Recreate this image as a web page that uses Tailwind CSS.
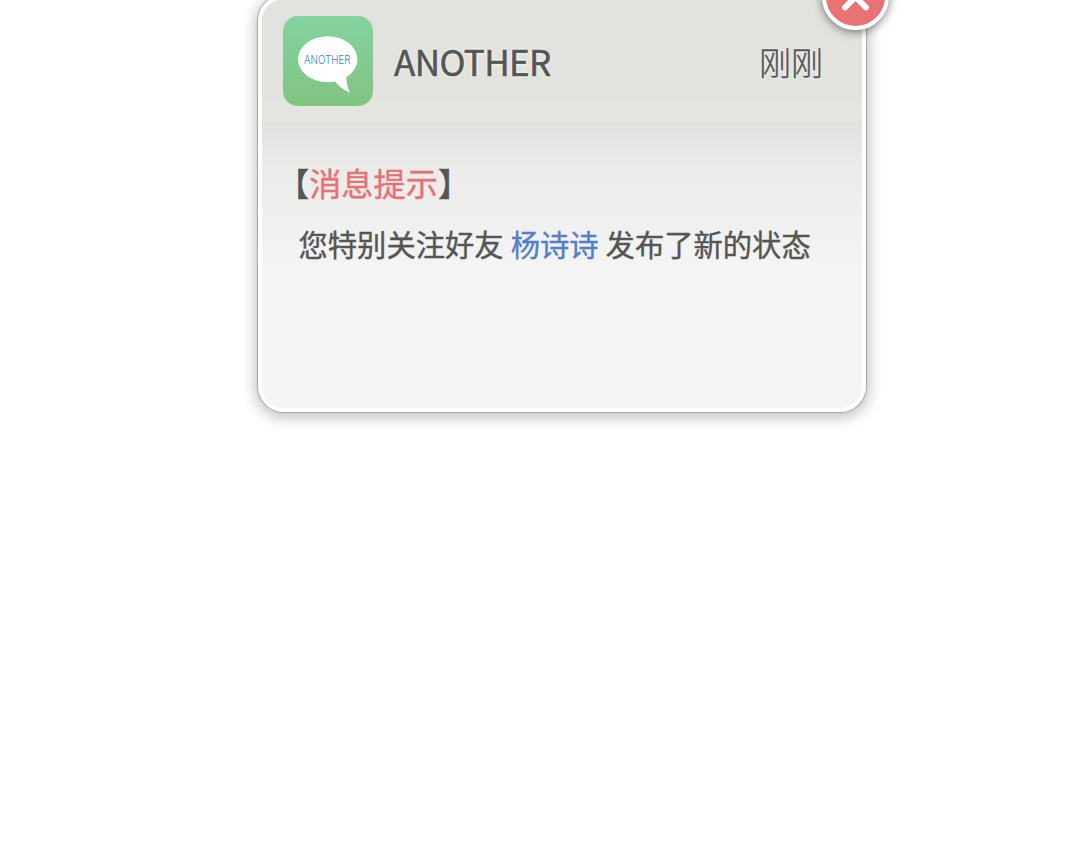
<!DOCTYPE html>
<html lang="zh-CN">
<head>
    <meta charset="UTF-8">
    <meta name="viewport" content="width=device-width, initial-scale=1.0">
    <title>ANOTHER</title>
    <script src="https://cdn.jsdelivr.net/npm/@tailwindcss/browser@4"></script>
</head>
<body class="h-screen overflow-hidden bg-white font-['Noto_Sans_CJK_SC',sans-serif] text-[#555654]">
    <!-- Notification card -->
    <main class="relative -mt-[5px] ml-[258px] h-[417px] w-[608px] rounded-[26px] border-4 border-white bg-[#f5f5f5] shadow-[0_0_1px_1px_#a8a8a8,0_3px_14px_3px_rgba(0,0,0,0.24)]">
        <!-- Header -->
        <header class="flex h-[122px] items-center rounded-t-[22px] bg-linear-to-b from-[#e2e3df] from-75% to-[#e6e7e2] pt-[2px] pr-[39px] pl-[21px]">
            <div class="h-[90px] w-[90px] overflow-hidden rounded-[15px] bg-linear-to-b from-[#84d3a0] to-[#81c480]">
                <svg class="h-full w-full" viewBox="0 0 90 90">
                    <ellipse cx="44.7" cy="43.3" rx="29.7" ry="23" fill="#fff"/>
                    <path d="M50 63 Q57 73 67 76.5 Q63 69 63 58 Z" fill="#fff"/>
                    <text x="21" y="48.2" textLength="46.5" lengthAdjust="spacingAndGlyphs" font-family="Inter, sans-serif" font-size="11.5" font-weight="300" fill="#3f7fd2">ANOTHER</text>
                </svg>
            </div>
            <h1 class="ml-[21px] text-[35px] leading-[50px] font-normal tracking-[-0.6px] [-webkit-text-stroke:0.6px_#555654] [text-shadow:0_0_2px_#fff,0_0_3px_#fff]">ANOTHER</h1>
            <time class="ml-auto text-[32px] leading-[50px] font-light [-webkit-text-stroke:0.5px_#555654] [text-shadow:0_0_2px_#fff,0_0_3px_#fff]">刚刚</time>
        </header>

        <!-- Message -->
        <section class="h-[287px] rounded-b-[22px] bg-linear-to-b from-[#e1e2df] via-[#ebebea] via-[48px] to-[#f5f5f5] to-[155px] pt-[37px] pl-[15px]">
            <h2 class="text-[32.2px] leading-[48px] font-normal [-webkit-text-stroke:0.4px_currentColor]">【<span class="text-[#e57373]">消息提示</span>】</h2>
            <p class="mt-[13px] ml-[21.5px] text-[29.3px] leading-[48px] font-normal whitespace-nowrap [word-spacing:0.5px] [-webkit-text-stroke:0.4px_currentColor]">您特别关注好友 <span class="text-[#557fc8] [-webkit-text-stroke:0.4px_#557fc8]">杨诗诗</span> 发布了新的状态</p>
        </section>

        <!-- Close button -->
        <button class="absolute -top-[36px] -right-[27px] flex h-[67px] w-[67px] items-center justify-center rounded-full border-4 border-white bg-[#e87274] shadow-[0_2px_10px_rgba(0,0,0,0.5)]" aria-label="关闭">
            <svg class="h-6 w-6 overflow-visible" viewBox="0 0 24 24" fill="none" stroke="#fff" stroke-width="6" stroke-linecap="round">
                <path d="M1 1.5 L22 22.5 M22 1.5 L1 22.5"/>
            </svg>
        </button>
    </main>
</body>
</html>
